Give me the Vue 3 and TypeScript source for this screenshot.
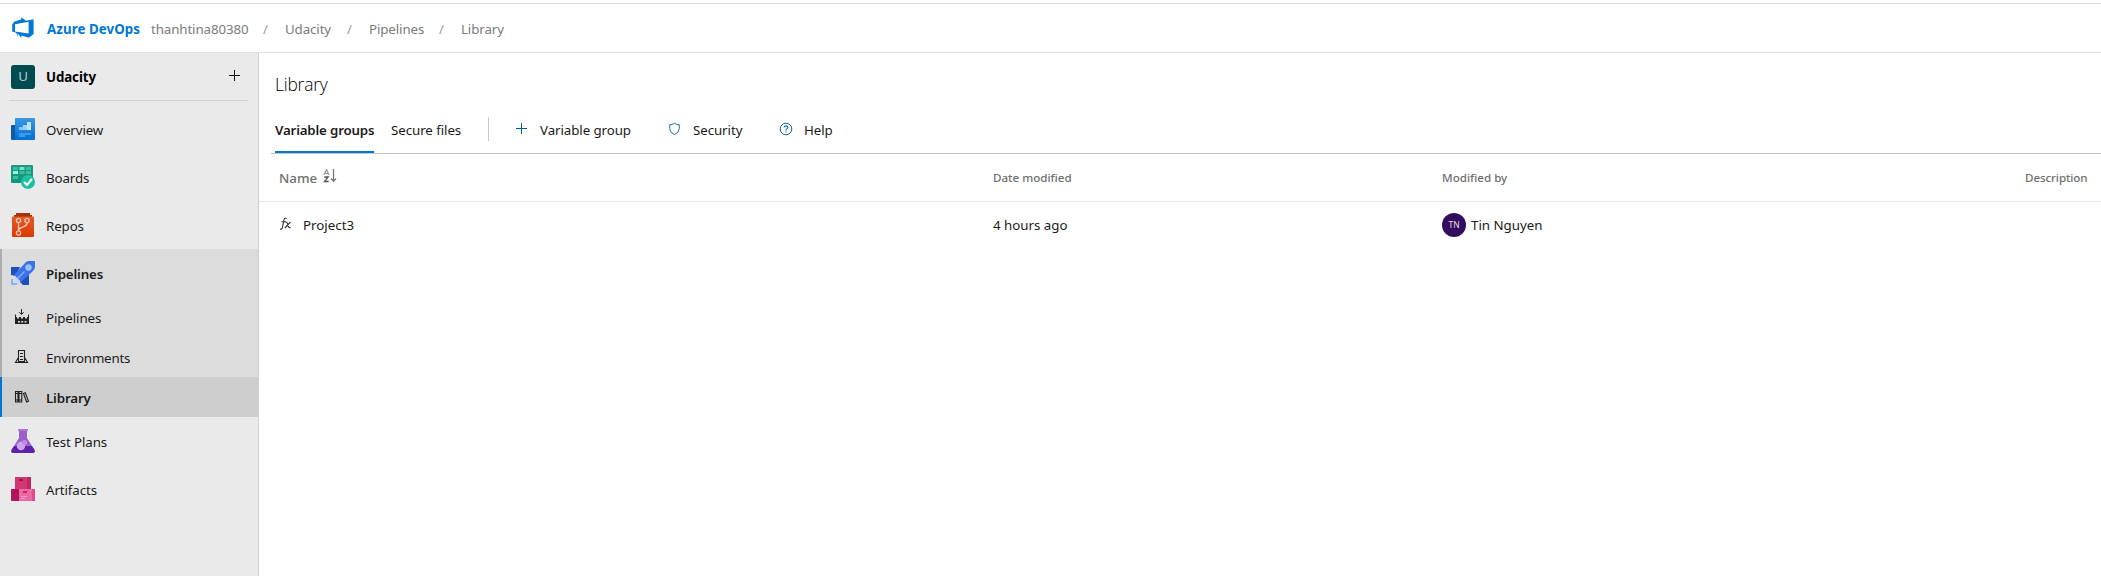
<script setup lang="ts">
interface NavItem { id: string; label: string; sub?: boolean; bold?: boolean; selected?: boolean; open?: boolean }

const nav: NavItem[] = [
  { id: 'overview', label: 'Overview' },
  { id: 'boards', label: 'Boards' },
  { id: 'repos', label: 'Repos' },
  { id: 'pipelines', label: 'Pipelines', bold: true, open: true },
  { id: 'builds', label: 'Pipelines', sub: true, open: true },
  { id: 'environments', label: 'Environments', sub: true, open: true },
  { id: 'library', label: 'Library', sub: true, bold: true, selected: true },
  { id: 'testplans', label: 'Test Plans' },
  { id: 'artifacts', label: 'Artifacts' },
]
const crumbs: string[] = ['Udacity', 'Pipelines', 'Library']
</script>

<template>
  <div class="page">
    <header class="topbar">
      <svg class="logo" viewBox="0 0 24 24" width="24" height="24">
        <path fill="#0078d7" fill-rule="evenodd" d="M1.200 8.500 3.500 5.600 10.200 3.400V1.200L15 4.800 22.600 3.200V18L18 21.800 10.300 19.400V22L6.600 17.200V21L5.200 16.800 1.200 15.600ZM4 8.200V15.600L17.600 17.400V5.800Z" />
      </svg>
      <span class="brand">Azure DevOps</span>
      <span class="org">thanhtina80380</span>
      <template v-for="c in crumbs" :key="c">
        <span class="slash">/</span><span class="crumb" :class="'c-' + c.toLowerCase()">{{ c }}</span>
      </template>
    </header>

    <div class="body">
      <aside class="sidebar">
        <div class="project">
          <span class="project-icon">U</span>
          <span class="project-name">Udacity</span>
          <svg class="add" viewBox="0 0 12 12" width="12" height="12"><path d="M5.500 0V11M0 5.500H11" stroke="#111" fill="none" /></svg>
        </div>
        <nav>
          <div v-for="n in nav" :key="n.id" class="item" :class="{ sub: n.sub, bold: n.bold, selected: n.selected, open: n.open }">
            <span class="icon">
              <svg v-if="n.id === 'overview'" viewBox="0 0 24 24" width="24" height="24">
                <defs><linearGradient id="ov" x2="0" y2="1"><stop stop-color="#3b97e4" /><stop offset="1" stop-color="#0470d2" /></linearGradient></defs>
                <path d="M1 8H5V23H1Q0 23 0 22V9Q0 8 1 8Z" fill="#0b5ca5" />
                <rect x="4" y="1" width="20" height="22" rx="1" fill="url(#ov)" />
                <path d="M8 10h4v3H8z" fill="#85c2fa" /><path d="M12 8h4v5h-4z" fill="#9bd0ff" /><path d="M16 5h4v8h-4z" fill="#c3e6ff" />
                <path d="M8 16h12v2H8zM8 18h6v2H8z" fill="#3c9ae8" />
              </svg>
              <svg v-else-if="n.id === 'boards'" viewBox="0 0 24 24" width="24" height="24">
                <defs><linearGradient id="bo" x2="0" y2="1"><stop stop-color="#27947c" /><stop offset="1" stop-color="#15947d" /></linearGradient></defs>
                <rect width="22" height="18" rx="1" fill="url(#bo)" />
                <path d="M2 2h5v3H2zM15 2h5v3h-5zM8.500 6h5v3h-5zM15 6h5v3h-5zM2 11h5v3H2z" fill="#2fc3a2" />
                <path d="M8.500 2h5v3h-5z" fill="#6ee9cf" /><path d="M2 6h5v3H2z" fill="#8dffe6" />
                <circle cx="17" cy="17" r="7" fill="#1bc1a3" /><path d="m13 17 3 3 5-6" stroke="#fff" stroke-width="2" fill="none" />
              </svg>
              <svg v-else-if="n.id === 'repos'" viewBox="0 0 24 24" width="24" height="24">
                <defs><linearGradient id="re" x2="0" y2="1"><stop stop-color="#e05a2a" /><stop offset="1" stop-color="#db3b00" /></linearGradient></defs>
                <path d="M5 0h14v2h2v3H3V2h2z" fill="#a93300" /><rect x="1" y="3.500" width="22" height="20.500" rx="1" fill="url(#re)" />
                <g stroke="#ffc4ad" stroke-width="1.400" fill="none"><circle cx="7.500" cy="7.500" r="2.100" /><circle cx="16" cy="7.500" r="2.100" /><circle cx="7.500" cy="20" r="2.100" /><path d="M7.500 9.600V18M16 9.600Q16 13 12 14T7.800 17.500" /></g>
              </svg>
              <svg v-else-if="n.id === 'pipelines'" viewBox="0 0 24 24" width="24" height="24">
                <path d="M0 6H9L5 15 0 14ZM9 17 18 14V24H12L9 21Z" fill="#1d50bd" />
                <path d="M15 1Q16 0 18 0H23Q24 0 24 1V6Q24 8 22 10L10 21 3 14Z" fill="#3c73e9" />
                <circle cx="17.500" cy="6.500" r="3.200" fill="#9cc0ff" /><path d="m6 18 7.500-7.500" stroke="#85acff" stroke-width="1.500" />
                <path d="m4 15 5 5-2 2-3-3z" fill="#c2d7fb" /><path d="M0 18h2v4h4v2H0z" fill="#89b0f6" />
              </svg>
              <svg v-else-if="n.id === 'builds'" viewBox="0 0 16 16" width="16" height="16">
                <path d="M7.500 0V5M5.300 3.200 7.500 5.500 9.700 3.200M1.500 5.500V14M14.500 5.500V14" stroke="#222" fill="none" />
                <path fill="#222" fill-rule="evenodd" d="M1 8H3V9.500H5V8h2v1.500h2V8h2v1.500h2V8h2v7H1ZM4 12v1.500h2V12zM7.200 12v1.500h2V12zM10.500 12v1.500h2V12z" />
              </svg>
              <svg v-else-if="n.id === 'environments'" viewBox="0 0 16 16" width="16" height="16">
                <path d="M4.500 12V1.500H10.500V12M6 4.500H9M6 7.500H9M6 10.500H9M4.500 8.500 1.500 13.500H13.500L10.500 8.500M4 12.500h7" stroke="#222" fill="none" stroke-width="1.100" />
              </svg>
              <svg v-else-if="n.id === 'library'" viewBox="0 0 16 16" width="16" height="16">
                <path d="M1.500 2.500h2.500v10.500h-2.500zM5 2.500h2.800v10.500h-2.800zM9.500 4.500 11.300 3.700 14.500 12.200 12.600 13ZM1.500 4.500h6.300M1.500 11h6.300" stroke="#222" fill="none" stroke-width="1.100" />
              </svg>
              <svg v-else-if="n.id === 'testplans'" viewBox="0 0 24 24" width="24" height="24">
                <path d="M8 1h8v8l7.500 12Q24.500 24 21.500 24H2.500Q-.5 24 .5 21L8 9Z" fill="#9b61cb" />
                <path d="M3 17H21L23.500 21Q24.500 24 21.500 24H2.500Q-.5 24 .5 21Z" fill="#6121aa" /><rect x="7" width="10" height="2" rx=".5" fill="#aa75d6" />
                <circle cx="10" cy="17" r="4.200" fill="#cda5ef" /><circle cx="13.500" cy="13.500" r="2.600" fill="#bd8ee4" />
              </svg>
              <svg v-else viewBox="0 0 24 24" width="24" height="24">
                <path d="M4 0h12v12H4z" fill="#d43573" /><path d="M16 0h4v12h-4z" fill="#bd2664" /><path d="M0 12h12v12H1q-1 0-1-1z" fill="#b4145a" />
                <path d="M8 12h13v12H8z" fill="#ee69a3" /><path d="M21 12h3v12h-3z" fill="#e0498a" />
                <path d="M8 2h4v2H8zM4 14h4v2H4z" fill="#9d184f" /><path d="M12 14h4v2h-4z" fill="#c62a69" /><path d="M10 19.500h6M10 21.500h4" stroke="#f99bc5" />
              </svg>
            </span>
            <span class="label" :class="'l-' + n.id">{{ n.label }}</span>
          </div>
        </nav>
      </aside>

      <main class="main">
        <h1 class="title">Library</h1>
        <div class="toolbar">
          <span class="tab active"><b>Variable groups</b></span>
          <span class="tab files">Secure files</span>
          <i class="divider"></i>
          <span class="cmd cmd-add"><svg viewBox="0 0 14 14" width="14" height="14"><path d="M6.500 1V12M1 6.500H12" stroke="#005a9e" fill="none" /></svg><span>Variable group</span></span>
          <span class="cmd cmd-sec"><svg viewBox="0 0 14 14" width="14" height="14"><path d="M6.500 1.200Q4.500 2.900 1.700 2.800V6.500Q1.700 10.500 6.500 12.600 11.300 10.500 11.300 6.500V2.800Q8.500 2.900 6.500 1.200Z" stroke="#1a6fad" fill="none" /></svg><span>Security</span></span>
          <span class="cmd cmd-help"><svg viewBox="0 0 14 14" width="14" height="14"><g stroke="#1464a5" fill="none"><circle cx="7" cy="7" r="5.800" /><path d="M5.200 5.600Q5.200 3.900 7 3.900T8.800 5.500Q8.800 6.300 7.900 6.900T7 8.400M7 9.400v1.200" stroke-width="1.100" /></g></svg><span>Help</span></span>
        </div>
        <div class="grid head">
          <div class="name-h"><span>Name</span>
            <svg viewBox="0 0 14 14" width="14" height="14"><path d="M1 6 3.500.5 6 6M2 4.500h3" stroke="#999" fill="none" stroke-width="1.200" /><path d="M1.200 8h4L1.500 12.500h4.200" stroke="#555" fill="none" stroke-width="1.300" /><path d="M10.500 0V12M8 9.500l2.500 2.700L13 9.500" stroke="#777" fill="none" stroke-width="1.300" /></svg>
          </div>
          <div class="h-date">Date modified</div><div class="h-by">Modified by</div><div class="h-desc">Description</div>
        </div>
        <div class="grid row">
          <div class="name-c">
            <svg viewBox="0 0 14 14" width="14" height="14"><path d="M7.700 1.500Q5.400.4 4.900 3.200L3.500 10.200Q3.100 12.700 1 12M2.600 4.700H6.700M6.500 5.200Q7.600 4.600 8.300 6.200L9.300 9.300Q10 11.200 11.500 10.400M11.500 5 5.900 11" stroke="#333" fill="none" stroke-width="1.100" /></svg>
            <span>Project3</span>
          </div>
          <div class="ago">4 hours ago</div>
          <div class="by"><span class="avatar">TN</span><span class="who">Tin Nguyen</span></div>
          <div></div>
        </div>
      </main>
    </div>
  </div>
</template>

<style>
html, body { margin: 0; background: #fff; overflow: hidden; }
</style>

<style scoped>
* { box-sizing: border-box; }
svg { display: block; flex: none; }
.page { width: 2101px; height: 576px; padding-top: 3px; display: flex; flex-direction: column; background: #fff; color: #1b1b1b; font: 13.3px/20px "Noto Sans", "Open Sans", sans-serif; white-space: nowrap; overflow: hidden; }
.topbar { height: 50px; flex: none; border-top: 1px solid #ddd; border-bottom: 1px solid #e2e2e2; display: flex; align-items: center; padding: 2px 0 0 11px; color: #7b7b7b; }
.logo { margin-top: -3px; }
.brand { width: 104px; margin-left: 12px; color: #0078d4; font-weight: 700; letter-spacing: 0.08px; }
.org { width: 112px; letter-spacing: -0.1px; }
.slash { width: 22px; color: #999; }
.crumb { width: 62px; letter-spacing: -0.1px; }
.c-pipelines { width: 70px; }
.body { flex: 1; display: flex; min-height: 0; }
.sidebar { width: 259px; flex: none; background: #eaeaea; border-right: 1px solid #cfcfcf; }
.project { height: 48px; margin: 0 10px 4px 9px; padding-left: 2px; border-bottom: 1px solid #cfcfcf; display: flex; align-items: center; }
.project-icon { width: 24px; height: 24px; border-radius: 3px; background: #004b50; color: #b5cdce; text-align: center; line-height: 23px; }
.project-name { margin-left: 11px; flex: 1; font-weight: 700; color: #000; letter-spacing: -0.1px; }
.add { margin-right: 7px; margin-top: -1px; }
.item { height: 48px; display: flex; align-items: center; padding-left: 11px; }
.item.sub { height: 40px; }
.item.open { background: #dcdcdc; box-shadow: inset 2px 0 #adadad; }
.item.selected { background: #cecece; box-shadow: inset 2px 0 #0078d4; }
.icon { width: 24px; display: flex; }
.sub .icon { padding-left: 3px; }
.label { margin-left: 11px; padding-top: 2px; letter-spacing: -0.1px; }
.bold .label { font-weight: 600; letter-spacing: -0.15px; }
.l-environments { letter-spacing: -0.2px; }
.main { flex: 1; min-width: 0; }
.title { margin: 19px 0 0 16px; height: 25px; font: 300 17.4px/24px "Open Sans", "Noto Sans", sans-serif; color: #000; letter-spacing: -0.2px; }
.toolbar { margin: 4px 0 0 12px; height: 53px; border-bottom: 1px solid #c4c4c4; display: flex; align-items: center; padding-left: 4px; }
.tab { height: 52px; line-height: 58px; }
.active { width: 99px; border-bottom: 2px solid #0078d4; }
.active b { font-weight: 600; letter-spacing: -0.17px; }
.files { margin-left: 17px; width: 70px; letter-spacing: -0.06px; }
.divider { width: 1px; height: 24px; background: #c8c8c8; margin-left: 27px; margin-top: 4px; }
.cmd { display: flex; align-items: center; padding-top: 6px; letter-spacing: -0.07px; }
.cmd svg { width: 14px; margin-right: 11px; margin-top: -2px; }
.cmd-add { margin-left: 26px; width: 153px; }
.cmd-sec { width: 111px; }
.grid { display: grid; grid-template-columns: 734px 449px 583px 1fr; align-items: center; }
.head { height: 48px; border-bottom: 1px solid #e5e5e5; color: #6f6f6f; font-size: 11.6px; font-weight: 500; }
.h-desc { letter-spacing: -0.1px; }
.name-h { display: flex; align-items: center; padding-left: 20px; font-size: 13.3px; }
.name-h svg { margin: -4px 0 0 6px; }
.row { height: 46px; }
.name-c { display: flex; align-items: center; padding-left: 20px; }
.name-c svg { margin-right: 10px; margin-top: -2px; }
.by { display: flex; align-items: center; }
.avatar { width: 24px; height: 24px; border-radius: 50%; background: #320d5e; color: #e5dced; font-size: 8.5px; line-height: 24px; text-align: center; margin-right: 5px; margin-top: -1px; }
</style>
